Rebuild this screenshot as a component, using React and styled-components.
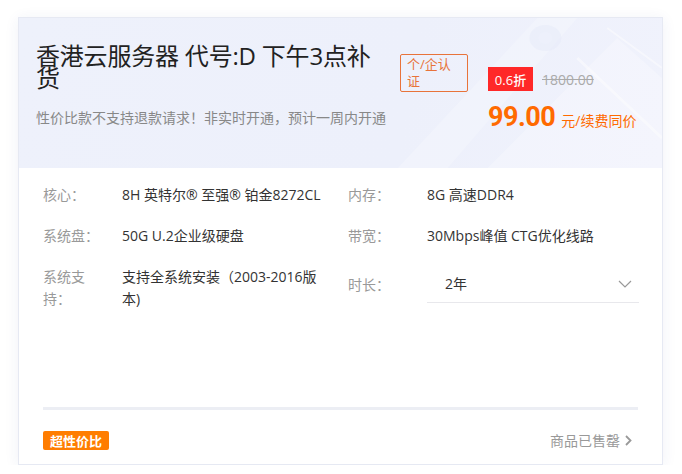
import * as React from "react";
import styled, { createGlobalStyle } from "styled-components";

const GlobalStyle = createGlobalStyle`
  body {
    margin: 0;
    background: #fff;
    font-family: "Open Sans", "Noto Sans CJK SC", sans-serif;
  }
`;

const specs = [
  { label: "核心：", value: "8H 英特尔® 至强® 铂金8272CL" },
  { label: "内存：", value: "8G 高速DDR4" },
  { label: "系统盘：", value: "50G U.2企业级硬盘" },
  { label: "带宽：", value: "30Mbps峰值 CTG优化线路" },
  { label: "系统支持：", value: "支持全系统安装（2003-2016版本)" },
];

const App = () => {
  return (
    <Root>
      <GlobalStyle />
      <Card>
        <Header>
          <Decor viewBox="0 0 645 150" preserveAspectRatio="none">
            <path d="M380 150 L520 0 L560 0 L430 150 Z" fill="#ffffff" opacity="0.22" />
            <path d="M470 150 L600 20 L645 60 L645 150 Z" fill="#ffffff" opacity="0.25" />
            <ellipse cx="528" cy="20" rx="16" ry="13" fill="#e4e9f9" opacity="0.45" />
            <ellipse cx="528" cy="20" rx="7" ry="6" fill="#edf0fb" />
            <path d="M560 40 L645 120" stroke="#ffffff" strokeWidth="3" opacity="0.45" />
            <path d="M590 10 L645 50" stroke="#ffffff" strokeWidth="2" opacity="0.45" />
          </Decor>
          <Info>
            <TitleRow>
              <Title>香港云服务器 代号:D 下午3点补货</Title>
              <AuthBadge>个/企认证</AuthBadge>
            </TitleRow>
            <Subtitle>性价比款不支持退款请求！非实时开通，预计一周内开通</Subtitle>
          </Info>
          <PriceBox>
            <DiscountRow>
              <DiscountTag>0.6折</DiscountTag>
              <OldPrice>1800.00</OldPrice>
            </DiscountRow>
            <PriceRow>
              <Price>99.00</Price>
              <Unit>元/续费同价</Unit>
            </PriceRow>
          </PriceBox>
        </Header>
        <Body>
          <SpecGrid>
            {specs.map((s) => (
              <SpecItem key={s.label}>
                <Label>{s.label}</Label>
                <Value>{s.value}</Value>
              </SpecItem>
            ))}
            <SpecItem $center>
              <Label>时长：</Label>
              <Select>
                <span>2年</span>
                <svg width="14" height="8" viewBox="0 0 14 8">
                  <path d="M1 1 L7 7 L13 1" fill="none" stroke="#999" strokeWidth="1.2" />
                </svg>
              </Select>
            </SpecItem>
          </SpecGrid>
          <Divider />
          <Footer>
            <HotTag>超性价比</HotTag>
            <SoldOut>
              商品已售罄
              <svg width="7" height="11" viewBox="0 0 7 11">
                <path d="M1 1 L5.5 5.5 L1 10" fill="none" stroke="#999" strokeWidth="1.8" />
              </svg>
            </SoldOut>
          </Footer>
        </Body>
      </Card>
    </Root>
  );
};

const Root = styled.div`
  padding: 17px 19px 0 18px;
`;

const Card = styled.div`
  width: 645px;
  box-sizing: border-box;
  border: 1px solid #e6e9f3;
  background: #fff;
  box-shadow: 0 2px 14px rgba(40, 60, 140, 0.07);
`;

const Header = styled.div`
  position: relative;
  display: flex;
  height: 150px;
  box-sizing: border-box;
  padding: 27px 24px 0 17px;
  background: linear-gradient(100deg, #eef1fb 0%, #edf0fb 60%, #f0f2fc 100%);
  overflow: hidden;
`;

const Decor = styled.svg`
  position: absolute;
  inset: 0;
  width: 100%;
  height: 100%;
  pointer-events: none;
`;

const Info = styled.div`
  position: relative;
  width: 452px;
  flex: none;
`;

const TitleRow = styled.div`
  display: flex;
  align-items: flex-start;
`;

const Title = styled.h1`
  margin: 0;
  width: 356px;
  font-size: 24px;
  line-height: 22px;
  font-weight: 400;
  color: #222;
  letter-spacing: -0.2px;
`;

const AuthBadge = styled.div`
  margin: 9px 0 0 8px;
  width: 68px;
  box-sizing: border-box;
  padding: 1px 6px;
  border: 1px solid #e8733a;
  border-radius: 2px;
  color: #e8733a;
  font-size: 13px;
  line-height: 17px;
`;

const Subtitle = styled.div`
  margin-top: 16px;
  font-size: 14px;
  line-height: 20px;
  color: #888;
`;

const PriceBox = styled.div`
  position: relative;
  flex: 1;
  padding-top: 22px;
`;

const DiscountRow = styled.div`
  display: flex;
  align-items: center;
  gap: 9px;
`;

const DiscountTag = styled.span`
  display: inline-flex;
  align-items: center;
  justify-content: center;
  width: 45px;
  height: 24px;
  background: #ff2828;
  color: #fff;
  font-size: 13px;
  font-weight: 500;
`;

const OldPrice = styled.span`
  font-size: 14px;
  color: #aaa;
  text-decoration: line-through;
`;

const PriceRow = styled.div`
  display: flex;
  align-items: baseline;
  gap: 6px;
  margin-top: 11px;
  white-space: nowrap;
`;

const Price = styled.span`
  font-family: Roboto, "Liberation Sans", sans-serif;
  font-size: 27px;
  line-height: 30px;
  font-weight: 700;
  letter-spacing: -0.5px;
  color: #ff6a00;
`;

const Unit = styled.span`
  font-size: 14px;
  color: #ff6a00;
`;

const Body = styled.div`
  padding: 16px 24px 14px 24px;
`;

const SpecGrid = styled.div`
  display: grid;
  grid-template-columns: 305px 1fr;
  row-gap: 19px;
`;

const SpecItem = styled.div`
  display: flex;
  align-items: ${(p) => (p.$center ? "center" : "flex-start")};
  align-self: start;
  font-size: 14px;
  line-height: 22px;
`;

const Label = styled.div`
  width: 60px;
  margin-right: 19px;
  flex: none;
  color: #999;
`;

const Value = styled.div`
  width: 212px;
  color: #333;
`;

const Select = styled.div`
  flex: 1;
  height: 37px;
  box-sizing: border-box;
  display: flex;
  align-items: center;
  justify-content: space-between;
  padding: 0 7px 0 18px;
  border-bottom: 1px solid #e8e8ec;
  color: #333;
`;

const Divider = styled.div`
  margin-top: 97px;
  height: 3px;
  background: #eceef4;
`;

const Footer = styled.div`
  display: flex;
  align-items: center;
  justify-content: space-between;
  margin-top: 20px;
`;

const HotTag = styled.span`
  display: inline-flex;
  align-items: center;
  height: 19px;
  padding: 0 7px;
  background: #ff7d00;
  border-radius: 2px;
  color: #fff;
  font-size: 13px;
  font-weight: 600;
`;

const SoldOut = styled.span`
  display: inline-flex;
  align-items: center;
  gap: 5px;
  margin-right: 6px;
  font-size: 14px;
  color: #999;
`;

export default App;
